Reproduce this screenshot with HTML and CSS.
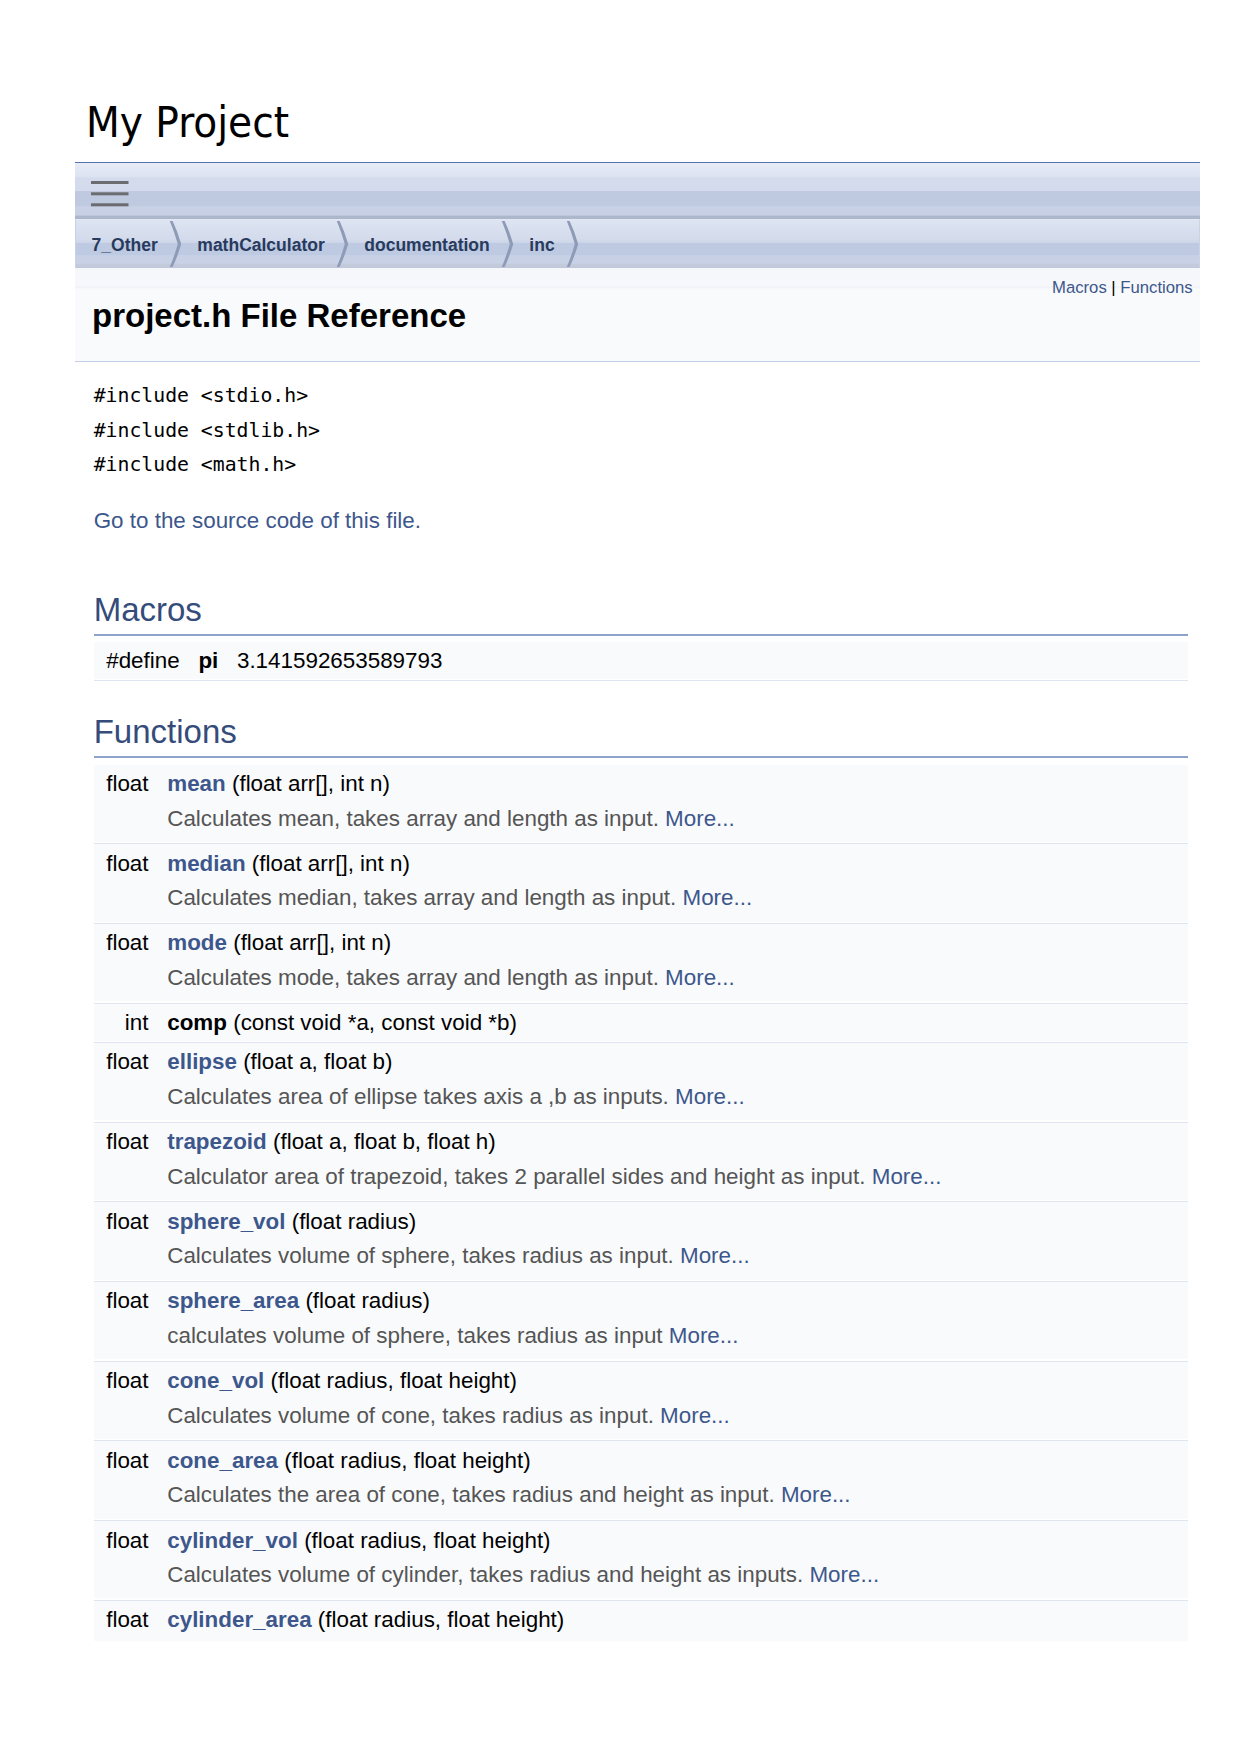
FILE: index.html
```html
<!DOCTYPE html>
<html lang="en">
<head>
<meta charset="utf-8">
<title>My Project: project.h File Reference</title>
<link rel="stylesheet" href="styles.css">
</head>
<body>
<div class="page">
  <div class="titlearea">
    <div class="projectname">My Project</div>
  </div>

  <div class="main-nav">
    <svg class="menu-btn" width="38" height="26" viewBox="0 0 38 26" aria-hidden="true">
      <rect x="0" y="0" width="37.5" height="3"/>
      <rect x="0" y="11.3" width="37.5" height="3"/>
      <rect x="0" y="22.3" width="37.5" height="3"/>
    </svg>
  </div>

  <div class="navpath">
    <ul>
      <li><a class="navelem" href="#">7_Other</a><svg class="bc" width="13" height="46" viewBox="0 0 13 46" aria-hidden="true"><path d="M0.8 0 L3.6 0 Q8.6 10.5 12.2 23 Q8.6 35.5 3.6 46 L0.8 46 Q5.4 35 8.8 23 Q5.4 11 0.8 0 Z"/></svg></li>
      <li><a class="navelem" href="#">mathCalculator</a><svg class="bc" width="13" height="46" viewBox="0 0 13 46" aria-hidden="true"><path d="M0.8 0 L3.6 0 Q8.6 10.5 12.2 23 Q8.6 35.5 3.6 46 L0.8 46 Q5.4 35 8.8 23 Q5.4 11 0.8 0 Z"/></svg></li>
      <li><a class="navelem" href="#">documentation</a><svg class="bc" width="13" height="46" viewBox="0 0 13 46" aria-hidden="true"><path d="M0.8 0 L3.6 0 Q8.6 10.5 12.2 23 Q8.6 35.5 3.6 46 L0.8 46 Q5.4 35 8.8 23 Q5.4 11 0.8 0 Z"/></svg></li>
      <li><a class="navelem" href="#">inc</a><svg class="bc" width="13" height="46" viewBox="0 0 13 46" aria-hidden="true"><path d="M0.8 0 L3.6 0 Q8.6 10.5 12.2 23 Q8.6 35.5 3.6 46 L0.8 46 Q5.4 35 8.8 23 Q5.4 11 0.8 0 Z"/></svg></li>
    </ul>
  </div>

  <div class="header">
    <div class="summary"><a href="#define-members">Macros</a> | <a href="#func-members">Functions</a></div>
    <div class="headertitle">
      <div class="title">project.h File Reference</div>
    </div>
  </div>

  <div class="contents">
    <div class="includes">
      <code>#include &lt;stdio.h&gt;</code><br>
      <code>#include &lt;stdlib.h&gt;</code><br>
      <code>#include &lt;math.h&gt;</code>
    </div>
    <p class="srclink"><a href="#">Go to the source code of this file.</a></p>

    <h2 class="groupheader first" id="define-members">Macros</h2>
    <div class="memberdecls">
      <div class="il">#define&#160;</div><div class="ir"><b>pi</b>&#160;&#160;&#160;3.141592653589793</div>
      <div class="sep"></div>
    </div>

    <h2 class="groupheader" id="func-members">Functions</h2>
    <div class="memberdecls">
      <div class="il">float&#160;</div><div class="ir"><a class="el" href="#">mean</a> (float arr[], int n)</div>
      <div class="dl"></div><div class="dr">Calculates mean, takes array and length as input. <a href="#">More...</a></div>
      <div class="sep"></div>

      <div class="il">float&#160;</div><div class="ir"><a class="el" href="#">median</a> (float arr[], int n)</div>
      <div class="dl"></div><div class="dr">Calculates median, takes array and length as input. <a href="#">More...</a></div>
      <div class="sep"></div>

      <div class="il">float&#160;</div><div class="ir"><a class="el" href="#">mode</a> (float arr[], int n)</div>
      <div class="dl"></div><div class="dr">Calculates mode, takes array and length as input. <a href="#">More...</a></div>
      <div class="sep"></div>

      <div class="il">int&#160;</div><div class="ir"><b>comp</b> (const void *a, const void *b)</div>
      <div class="sep"></div>

      <div class="il">float&#160;</div><div class="ir"><a class="el" href="#">ellipse</a> (float a, float b)</div>
      <div class="dl"></div><div class="dr">Calculates area of ellipse takes axis a ,b as inputs. <a href="#">More...</a></div>
      <div class="sep"></div>

      <div class="il">float&#160;</div><div class="ir"><a class="el" href="#">trapezoid</a> (float a, float b, float h)</div>
      <div class="dl"></div><div class="dr">Calculator area of trapezoid, takes 2 parallel sides and height as input. <a href="#">More...</a></div>
      <div class="sep"></div>

      <div class="il">float&#160;</div><div class="ir"><a class="el" href="#">sphere_vol</a> (float radius)</div>
      <div class="dl"></div><div class="dr">Calculates volume of sphere, takes radius as input. <a href="#">More...</a></div>
      <div class="sep"></div>

      <div class="il">float&#160;</div><div class="ir"><a class="el" href="#">sphere_area</a> (float radius)</div>
      <div class="dl"></div><div class="dr">calculates volume of sphere, takes radius as input <a href="#">More...</a></div>
      <div class="sep"></div>

      <div class="il">float&#160;</div><div class="ir"><a class="el" href="#">cone_vol</a> (float radius, float height)</div>
      <div class="dl"></div><div class="dr">Calculates volume of cone, takes radius as input. <a href="#">More...</a></div>
      <div class="sep"></div>

      <div class="il">float&#160;</div><div class="ir"><a class="el" href="#">cone_area</a> (float radius, float height)</div>
      <div class="dl"></div><div class="dr">Calculates the area of cone, takes radius and height as input. <a href="#">More...</a></div>
      <div class="sep"></div>

      <div class="il">float&#160;</div><div class="ir"><a class="el" href="#">cylinder_vol</a> (float radius, float height)</div>
      <div class="dl"></div><div class="dr">Calculates volume of cylinder, takes radius and height as inputs. <a href="#">More...</a></div>
      <div class="sep"></div>

      <div class="il last">float&#160;</div><div class="ir last"><a class="el" href="#">cylinder_area</a> (float radius, float height)</div>
    </div>
  </div>
</div>
</body>
</html>
```

FILE: styles.css
```css
html, body {
  margin: 0;
  padding: 0;
  background: #ffffff;
}

body {
  font-family: "Liberation Sans", Arial, sans-serif;
  font-size: 22.4px;
  line-height: 34.5px;
  color: #000000;
}

a {
  color: #3D578C;
  text-decoration: none;
}

.page {
  margin-left: 75px;
  width: 1125px;
}

/* ---------- title area ---------- */
.titlearea {
  padding: 95.5px 0 14.5px 11px;
  border-bottom: 1px solid #5373B4;
}

.projectname {
  font-family: "DejaVu Sans Condensed", "DejaVu Sans", sans-serif;
  font-stretch: condensed;
  font-size: 43.5px;
  line-height: 52px;
  height: 52px;
  color: #000000;
}

/* ---------- main nav ---------- */
.main-nav {
  height: 56px;
  box-sizing: border-box;
  padding: 18px 0 0 15.7px;
  background: linear-gradient(to bottom,
    #E7ECF6 0%,
    #DCE3F0 25%,
    #D3DBEC 26.5%,
    #D3DBEC 49.5%,
    #BFCAE1 51%,
    #BFCAE1 76.5%,
    #C8D1E5 78%,
    #C6CFE3 93%,
    #ADB7CC 95%,
    #ADB7CC 100%);
}

.menu-btn {
  display: block;
  fill: #6A6C70;
}

/* ---------- breadcrumb ---------- */
.navpath ul {
  list-style: none;
  margin: 0;
  height: 49px;
  box-sizing: border-box;
  padding: 0 0 0 15.6px;
  display: flex;
  align-items: center;
  border: 1px solid #C9D2E6;
  border-top-color: #E2E7F1;
  border-bottom-color: #BFC7D8;
  background: linear-gradient(to bottom,
    #DDE4F1 0%,
    #D3DBEC 40%,
    #CDD6E9 48%,
    #BECAE1 50%,
    #BECAE1 74%,
    #C7D1E6 76%,
    #C8D1E5 92%,
    #C2CADB 95%,
    #C2CADB 100%);
}

.navpath li {
  display: flex;
  align-items: center;
  height: 47px;
}

.navelem {
  font-family: "Liberation Sans", Arial, sans-serif;
  font-weight: bold;
  font-size: 17.5px;
  line-height: 41.6px;
  padding-top: 5.4px;
  color: #283A5D;
}

.bc {
  display: block;
  margin: 1px 15.3px 0 11.3px;
  fill: #8D9BB7;
}

/* ---------- header ---------- */
.header {
  background: linear-gradient(to bottom,
    #F6F7FB 0px,
    #F7F8FB 18px,
    #EEF1F7 19px,
    #F9FAFC 21px,
    #F9FAFC 100%);
  border-bottom: 1px solid #C4CFE5;
}

.summary {
  float: right;
  font-size: 16.7px;
  line-height: 34.5px;
  padding: 3px 7.3px 0 0;
  color: #000000;
}

.headertitle {
  padding: 25.7px 0 23.8px 17px;
}

.title {
  font-size: 33px;
  line-height: 44px;
  font-weight: bold;
}

/* ---------- contents ---------- */
.contents {
  margin: 0 12.3px 0 18.7px;
}

.includes {
  margin-top: 16.8px;
  font-family: "DejaVu Sans Mono", monospace;
  font-size: 19.8px;
  line-height: 34.5px;
}

.includes code {
  font-family: inherit;
  font-size: inherit;
}

.srclink {
  margin: 21.4px 0 0;
}

.groupheader {
  margin: 32.4px 0 0;
  padding: 0 0 5px;
  font-size: 33px;
  line-height: 37.9px;
  font-weight: normal;
  color: #354C7B;
  border-bottom: 2px solid #8EA3CC;
}

.groupheader.first {
  margin-top: 52px;
}

.memberdecls {
  margin-top: 6.2px;
  display: grid;
  grid-template-columns: max-content 1fr;
}

.il, .ir, .dl, .dr {
  background: #F9FAFC;
}

.il {
  padding: 2.5px 0 0 12.5px;
  text-align: right;
  white-space: nowrap;
  line-height: 34.5px;
}

.ir {
  padding: 2.5px 0 0 12.5px;
  line-height: 34.5px;
  white-space: nowrap;
}

.ir .el {
  font-weight: bold;
}

.dr {
  padding: 0 12.5px 5.9px 12.5px;
  line-height: 34.5px;
  color: #555555;
}

.sep {
  grid-column: 1 / -1;
  height: 1.3px;
  border-bottom: 1px solid #DEE4F0;
}

.il.last, .ir.last {
  padding-bottom: 3.5px;
}
```
